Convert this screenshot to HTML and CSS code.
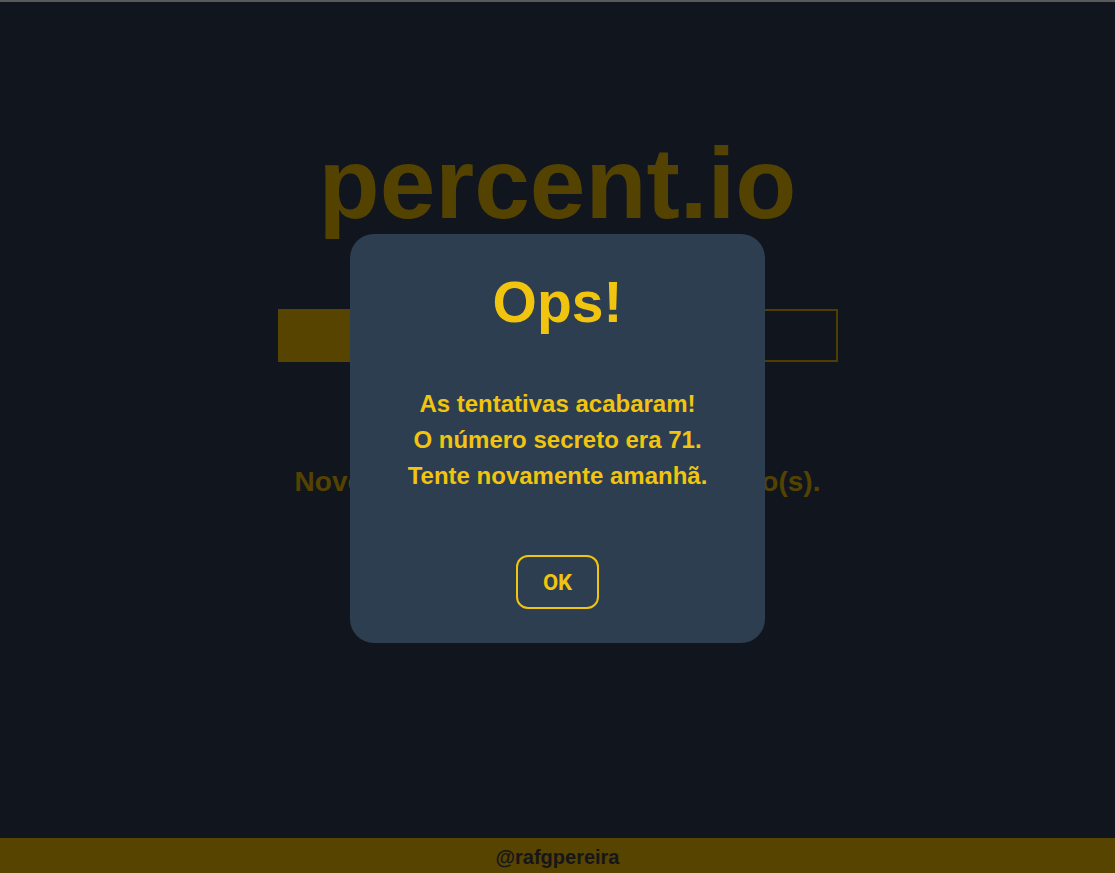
FILE: index.html
```html
<!DOCTYPE html>
<html lang="pt-BR">
<head>
<meta charset="utf-8">
<title>percent.io</title>
<link rel="stylesheet" href="styles.css">
</head>
<body>
<div class="page">
  <main class="main">
    <h1 class="brand">percent.io</h1>
    <div class="guess-row">
      <div class="guess-input"></div>
      <div class="guess-box"></div>
    </div>
    <p class="next">Novo número em 9 horas e 3 minuto(s).</p>
  </main>
  <footer class="footer">@rafgpereira</footer>
</div>
<div class="overlay">
  <div class="modal">
    <h2 class="modal-title">Ops!</h2>
    <p class="modal-text">As tentativas acabaram!<br>O número secreto era 71.<br>Tente novamente amanhã.</p>
    <button class="modal-btn">OK</button>
  </div>
</div>
</body>
</html>
```
FILE: styles.css
```css
* { box-sizing: border-box; }
html, body { margin: 0; padding: 0; }
body {
  background: #11151e;
  font-family: "Liberation Sans", Arial, sans-serif;
  border-top: 2px solid #5a5a5a;
}
.page {
  min-height: 871px;
  display: flex;
  flex-direction: column;
}
.main {
  flex: 1;
  display: flex;
  flex-direction: column;
  align-items: center;
  padding-top: 124px;
}
.brand {
  margin: 0;
  font-size: 100px;
  font-weight: 700;
  line-height: 115px;
  color: #544300;
}
.guess-row {
  margin-top: 68px;
  display: flex;
  width: 560px;
  height: 53px;
}
.guess-input {
  flex: 1;
  background: #564400;
}
.guess-box {
  flex: 1;
  border: 2px solid #4e3e00;
}
.next {
  margin: 104px 0 0;
  font-size: 28px;
  font-weight: 700;
  color: #544300;
  white-space: nowrap;
}
.footer {
  height: 35px;
  padding-top: 3px;
  background: #574400;
  color: #16161a;
  font-size: 20px;
  font-weight: 700;
  text-align: center;
  line-height: 32px;
}
.overlay {
  position: fixed;
  inset: 0;
  padding-top: 4px;
  display: flex;
  align-items: center;
  justify-content: center;
}
.modal {
  width: 415px;
  background: #2c3e50;
  border-radius: 24px;
  padding: 36px 24px 34px;
  display: flex;
  flex-direction: column;
  align-items: center;
  text-align: center;
  color: #f1c40f;
}
.modal-title {
  margin: 0;
  font-size: 57px;
  line-height: 64px;
  font-weight: 700;
}
.modal-text {
  margin: 52px 0 0;
  font-size: 24px;
  line-height: 36px;
  font-weight: 700;
}
.modal-btn {
  margin-top: 61px;
  width: 83px;
  height: 54px;
  background: transparent;
  border: 2px solid #f1c40f;
  border-radius: 12px;
  color: #f1c40f;
  font-family: Roboto, "Liberation Sans", sans-serif;
  font-weight: 700;
  font-size: 22px;
  padding: 0;
}
```
